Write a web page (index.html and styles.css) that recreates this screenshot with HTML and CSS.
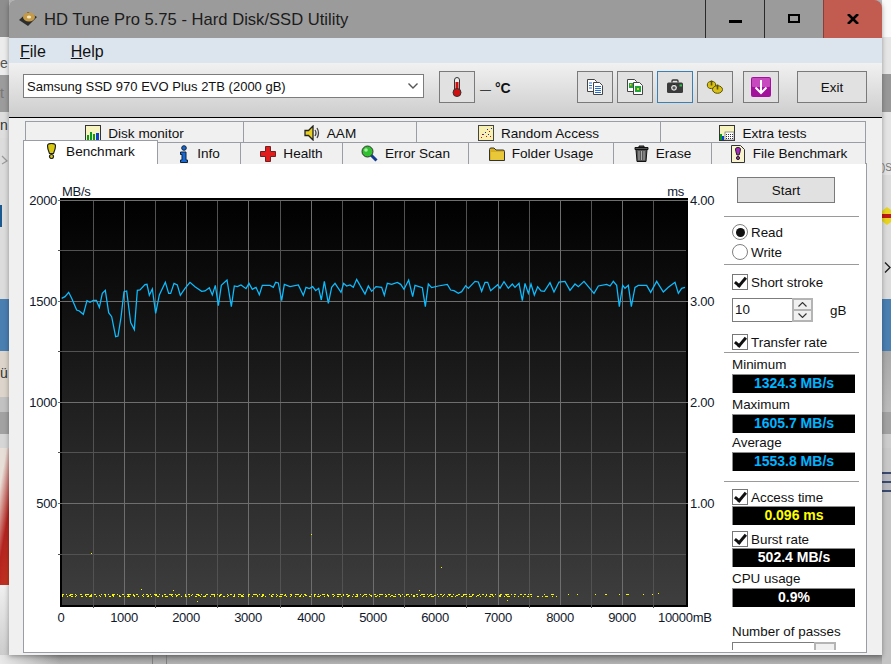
FILE: index.html
```html
<!DOCTYPE html>
<html lang="en">
<head>
    <meta charset="UTF-8">
    <meta name="viewport" content="width=device-width, initial-scale=1.0">
    <title>HD Tune Pro 5.75</title>
    <link rel="stylesheet" href="styles.css">
</head>
<body>
    <!-- what shows of the desktop behind the window -->
    <div class="behind behind-left">
        <div class="b b1"></div>
        <div class="b b2">e</div>
        <div class="b b3">t</div>
        <div class="b b4">n</div>
        <div class="b b5">
            <svg class="left-arrow" viewBox="0 0 9 10" width="9" height="10"><path d="M2 1l5 5-5 3" fill="none" stroke="#999" stroke-width="1.200"/></svg>
            <span class="left-chip"></span>
        </div>
        <div class="b b6"></div>
        <div class="b b7">ü</div>
        <div class="b b8"></div>
        <div class="b b9"></div>
        <div class="b b10"></div>
        <div class="b b11"></div>
        <div class="b b12"></div>
    </div>
    <div class="behind behind-right">
        <div class="b r1"></div>
        <div class="b r2"></div>
        <div class="b r3"></div>
        <div class="b r4">)S</div>
        <div class="b r5">
            <svg class="badge" viewBox="0 0 9 18" width="9" height="18">
                <path d="M5 0 9 3v12l-4 3-5-4V4z" fill="#e8d420"/>
                <path d="M0 7h9v4H0z" fill="#c01818"/>
            </svg>
            <svg class="right-arrow" viewBox="0 0 7 11" width="7" height="11"><path d="M1 .5l5 5-5 5" fill="none" stroke="#222" stroke-width="1.400"/></svg>
        </div>
        <div class="b b6"></div>
        <div class="b r6"></div>
        <div class="b b9"></div>
        <div class="b r7"></div>
        <div class="b r8"></div>
        <div class="b r9"></div>
        <div class="b r10"></div>
    </div>
    <div class="behind behind-bottom"></div>

    <div class="window">
        <div class="title-bar">
            <svg class="app-icon" viewBox="0 0 18 16" width="18" height="16">
                <path d="M0 9 9 1l9 5-9 9z" fill="#2c2c2c"/>
                <ellipse cx="10" cy="6" rx="6" ry="4.500" fill="#c49a48"/>
                <ellipse cx="10" cy="6" rx="2.200" ry="1.600" fill="#f4e6bc"/>
            </svg>
            <span class="title-text">HD Tune Pro 5.75 - Hard Disk/SSD Utility</span>
            <div class="win-btn win-min"><span class="min-glyph"></span></div>
            <div class="win-btn win-max"><span class="max-glyph"></span></div>
            <div class="win-btn win-close">
                <svg viewBox="0 0 12 10" width="12" height="10"><path d="M1 0 11 10M11 0 1 10" stroke="#000" stroke-width="2.600"/></svg>
            </div>
        </div>

        <div class="menu-bar">
            <span class="menu-item"><u>F</u>ile</span>
            <span class="menu-item"><u>H</u>elp</span>
        </div>

        <div class="toolbar">
            <div class="drive-select">
                <span>Samsung SSD 970 EVO Plus 2TB (2000 gB)</span>
                <svg viewBox="0 0 10 6" width="10" height="6"><path d="M.5.5 5 5 9.500.5" fill="none" stroke="#555" stroke-width="1.400"/></svg>
            </div>
            <div class="tool-btn temp-btn">
                <svg viewBox="0 0 12 20" width="12" height="20">
                    <rect x="3.500" y=".5" width="5" height="14" rx="2.500" fill="#eee" stroke="#333"/>
                    <rect x="4.500" y="5" width="3" height="9" fill="#d01010"/>
                    <circle cx="6" cy="15.500" r="4" fill="#d01010" stroke="#333"/>
                </svg>
            </div>
            <span class="temp-text"><span class="temp-dash">—</span> °C</span>
            <div class="tool-btn copy-btn">
                <svg viewBox="0 0 18 18" width="18" height="18">
                    <path d="M1.500 1.500h7l2 2v10h-9z" fill="#fff" stroke="#444"/>
                    <path d="M7.500 4.500h6l3 3v9h-9z" fill="#fff" stroke="#444"/>
                    <path d="M3 5h3M3 7.500h3M3 10h3M9 8.500h6M9 10.500h6M9 12.500h6M9 14.500h6" stroke="#2a6fd0"/>
                </svg>
            </div>
            <div class="tool-btn copy-img-btn">
                <svg viewBox="0 0 18 18" width="18" height="18">
                    <path d="M1.500 1.500h7l2 2v10h-9z" fill="#fff" stroke="#444"/>
                    <path d="M7.500 4.500h6l3 3v9h-9z" fill="#fff" stroke="#444"/>
                    <rect x="3" y="5" width="4" height="5" fill="#1fa83a"/>
                    <rect x="9" y="8" width="6" height="6" fill="#1fa83a"/>
                    <rect x="4" y="6" width="1.500" height="1.500" fill="#e8d020"/>
                    <rect x="11" y="10" width="2" height="2" fill="#e8d020"/>
                </svg>
            </div>
            <div class="tool-btn camera-btn">
                <svg viewBox="0 0 18 16" width="18" height="16">
                    <path d="M6 3.500V2q0-1 1-1h4q1 0 1 1v1.500" fill="none" stroke="#333" stroke-width="1.300"/>
                    <rect x="1" y="3.500" width="16" height="10.500" rx="1.500" fill="#3a3a3a"/>
                    <circle cx="8" cy="8.800" r="3.500" fill="#ddd" stroke="#222"/>
                    <circle cx="8" cy="8.800" r="1.600" fill="#555"/>
                    <rect x="13.500" y="5.500" width="2.500" height="2" fill="#2bc04a"/>
                </svg>
            </div>
            <div class="tool-btn keys-btn">
                <svg viewBox="0 0 18 16" width="18" height="16">
                    <ellipse cx="5.500" cy="6" rx="4.200" ry="3.600" fill="#d8c018" stroke="#5a5200"/>
                    <ellipse cx="11.500" cy="10.500" rx="5" ry="3.800" fill="#d8c018" stroke="#5a5200"/>
                    <path d="M5.500 1.500v5M11.500 5.500v5" stroke="#5a5200" stroke-width="1.600"/>
                </svg>
            </div>
            <div class="tool-btn save-btn">
                <svg viewBox="0 0 20 20" width="20" height="20">
                    <rect width="20" height="20" rx="2" fill="#a2109c"/>
                    <rect x="1" y="1" width="18" height="9" rx="1" fill="#c848c0"/>
                    <path d="M10 3v13M4.500 10.500 10 16l5.500-5.500" fill="none" stroke="#fff" stroke-width="2"/>
                </svg>
            </div>
            <div class="tool-btn exit-btn">Exit</div>
        </div>

        <div class="tab-row tab-row-top">
            <div class="tab">
                <svg viewBox="0 0 16 16" width="16" height="16">
                    <rect x=".5" y=".5" width="15" height="15" fill="#f8f4c0" stroke="#333"/>
                    <path d="M2 15V10h2v5zM5 15V7h2v8zM8 15V9h2v6z" fill="#0a9a20"/>
                    <path d="M11 15V8h3v7z" fill="#1040d0"/>
                </svg>
                Disk monitor
            </div>
            <div class="tab">
                <svg viewBox="0 0 16 16" width="16" height="16">
                    <path d="M1 5.500h3.500L9 1v14l-4.500-4.500H1z" fill="#e8d020" stroke="#222" stroke-width="1.300"/>
                    <path d="M11 5q2 3 0 6M13 3q3 5 0 10" fill="none" stroke="#444" stroke-width="1.300"/>
                </svg>
                AAM
            </div>
            <div class="tab">
                <svg viewBox="0 0 16 16" width="16" height="16">
                    <rect x=".5" y=".5" width="15" height="15" fill="#f8f0b0" stroke="#444"/>
                    <path d="M3 12h1v1H3zM5 9h1v1H5zM8 11h1v1H8zM11 6h1v1h-1zM12 11h1v1h-1z" fill="#d01010"/>
                    <path d="M4 9h1v1H4zM7 7h1v1H7zM9 4h1v1H9zM10 9h1v1h-1zM13 3h1v1h-1z" fill="#1030d0"/>
                </svg>
                Random Access
            </div>
            <div class="tab">
                <svg viewBox="0 0 16 16" width="16" height="16">
                    <rect x=".5" y=".5" width="15" height="15" fill="#f8f4c0" stroke="#333"/>
                    <rect x="1" y="9" width="2" height="6" fill="#0a9a20"/>
                    <rect x="3" y="11" width="2" height="4" fill="#1040d0"/>
                    <rect x="6" y="7" width="9" height="8" fill="#fff" stroke="#555" stroke-width=".6"/>
                    <path d="M7 9h1v1H7zM9 9h1v1H9zM11 9h1v1h-1zM13 9h1v1h-1zM7 11h1v1H7zM9 11h1v1H9zM11 11h1v1h-1zM13 11h1v1h-1zM7 13h1v1H7zM9 13h1v1H9zM11 13h1v1h-1zM13 13h1v1h-1z" fill="#334"/>
                </svg>
                Extra tests
            </div>
        </div>

        <div class="tab-row tab-row-bottom">
            <div class="tab tab-active">
                <svg viewBox="0 0 11 16" width="11" height="16">
                    <path d="M1.500 3q0-2.500 4-2.500t4 2.500q0 3-2 7.500h-4Q1.500 6 1.500 3z" fill="#d8c810" stroke="#222" stroke-width="1.200"/>
                    <circle cx="5.500" cy="13.500" r="2" fill="#d8c810" stroke="#222" stroke-width="1.200"/>
                </svg>
                Benchmark
            </div>
            <div class="tab">
                <svg viewBox="0 0 12 18" width="12" height="18">
                    <circle cx="6" cy="3" r="2.300" fill="#1868d8" stroke="#123"/>
                    <path d="M2.500 7H8v8h1.500v2.500h-7V15H4V9.500H2.500z" fill="#1868d8" stroke="#123"/>
                </svg>
                Info
            </div>
            <div class="tab">
                <svg viewBox="0 0 16 16" width="16" height="16">
                    <path d="M5.500.5h5v5h5v5h-5v5h-5v-5h-5v-5h5z" fill="#e01c1c" stroke="#702020"/>
                </svg>
                Health
            </div>
            <div class="tab">
                <svg viewBox="0 0 17 17" width="17" height="17">
                    <path d="M10 10l5.500 5.500" stroke="#123a90" stroke-width="3"/>
                    <circle cx="6.500" cy="6.500" r="5.500" fill="#30c030" stroke="#333"/>
                    <circle cx="5" cy="5" r="1.800" fill="#a8f0a0"/>
                </svg>
                Error Scan
            </div>
            <div class="tab">
                <svg viewBox="0 0 16 16" width="16" height="16">
                    <path d="M.5 3.500q0-1.500 1.500-1.500h3l2 2h7q1.500 0 1.500 1.500v9h-15z" fill="#d8b020" stroke="#333"/>
                    <rect x="2" y="6" width="13" height="8" fill="#e8c838"/>
                </svg>
                Folder Usage
            </div>
            <div class="tab">
                <svg viewBox="0 0 15 17" width="15" height="17">
                    <path d="M1 2.500h13v2H1zM5 2.500V1h5v1.500" fill="#555" stroke="#111"/>
                    <path d="M2 4.500h11l-1 12H3z" fill="#555" stroke="#111"/>
                    <path d="M5 6v9M7.500 6v9M10 6v9" stroke="#aaa"/>
                </svg>
                Erase
            </div>
            <div class="tab">
                <svg viewBox="0 0 16 18" width="16" height="18">
                    <path d="M1.500.5h9l4 4v13h-13z" fill="#f8f4d0" stroke="#333"/>
                    <path d="M5.500 4q0-1.500 2.500-1.500T10.500 4q0 2-1.400 6H6.900Q5.500 6 5.500 4z" fill="#a828c0" stroke="#222"/>
                    <circle cx="8" cy="13" r="1.600" fill="#a828c0" stroke="#222"/>
                </svg>
                File Benchmark
            </div>
        </div>

        <div class="tab-body">
            <svg class="chart" viewBox="24 164 700 487" width="700" height="487">
                <defs>
                    <linearGradient id="plotFill" x1="0" y1="0" x2="0" y2="1">
                        <stop offset="0" stop-color="#000"/>
                        <stop offset="1" stop-color="#3e3e3e"/>
                    </linearGradient>
                </defs>
                <rect x="60" y="198" width="628" height="409" fill="#000"/>
                <rect x="62" y="200" width="624" height="405" fill="url(#plotFill)"/>

                <g class="grid-minor">
                    <path d="M93.500 200V608M155.500 200V608M217.500 200V608M280.500 200V608M342.500 200V608M404.500 200V608M466.500 200V608M529.500 200V608M591.500 200V608M653.500 200V608"/>
                    <path d="M58 250.500H686M58 351.500H686M58 452.500H686M58 554.500H686"/>
                </g>
                <g class="grid-major">
                    <path d="M124.500 200V605M186.500 200V605M248.500 200V605M311.500 200V605M373.500 200V605M435.500 200V605M498.500 200V605M560.500 200V605M622.500 200V605"/>
                    <path d="M58 200.500H688M58 301.500H688M58 402.500H688M58 503.500H688"/>
                </g>

                <g class="latency">
                    <path class="dots-a" d="M62 594.500H530"/>
                    <path class="dots-d" d="M62 595.500H510"/>
                    <path class="dots-b" d="M62 596.500H560"/>
                    <path class="dots-c" d="M520 594.500H660"/>
                    <path d="M91 553h1v1h-1zM311 534h1v1h-1zM441 567h1v1h-1zM141 589h1v1h-1zM173 590h1v1h-1zM197 601h1v1h-1zM419 590h1v1h-1zM507 600h1v1h-1zM658 593h1v1h-1z" class="stray"/>
                </g>

                <g transform="translate(20 180) scale(.33333)">
                    <polyline class="speed" points="125,355 135,350 146,337 155,355 170,390 178,393 190,403 201,362 210,367 220,361 229,361 238,382 247,340 256,331 266,398 275,410 287,470 294,468 303,412 312,335 320,333 332,428 343,449 352,331 360,330 375,314 381,313 388,346 397,327 407,400 418,345 436,307 446,340 452,340 462,310 472,315 481,346 495,325 510,307 525,320 545,334 555,333 568,323 577,345 586,316 595,377 604,316 621,300 634,380 643,318 652,320 663,315 678,326 687,310 697,328 708,322 718,344 727,316 750,316 760,322 767,307 775,309 785,362 793,313 810,320 835,315 850,346 858,322 868,326 878,320 887,332 896,325 904,360 913,304 925,370 935,322 945,310 963,337 971,310 980,318 990,315 1000,322 1010,298 1020,316"/>
                </g>
                <g transform="translate(360 180) scale(.33333)">
                    <polyline class="speed" points="0,316 15,342 25,318 35,334 48,320 65,322 73,346 82,310 95,313 112,307 122,313 132,328 146,300 158,350 165,316 187,323 196,380 205,312 215,323 235,318 262,313 272,330 282,332 295,340 305,335 317,317 325,325 345,304 355,306 365,334 375,307 383,307 392,332 413,314 420,325 432,305 445,325 457,312 465,322 477,310 487,362 495,310 505,340 513,312 523,345 533,320 543,333 553,334 570,308 582,336 597,306 615,304 630,331 645,312 655,320 672,304 702,340 715,318 740,313 750,318 760,304 770,316 778,380 788,316 795,325 805,316 814,380 825,322 835,316 860,316 872,337 890,304 910,336 925,322 945,307 955,340 965,325 975,322"/>
                </g>

                <g class="axis-label">
                    <text x="62" y="196">MB/s</text>
                    <text x="684" y="196" text-anchor="end">ms</text>
                    <g text-anchor="end">
                        <text x="57" y="205">2000</text>
                        <text x="57" y="306">1500</text>
                        <text x="57" y="407">1000</text>
                        <text x="57" y="508">500</text>
                    </g>
                    <text x="690" y="205">4.00</text>
                    <text x="690" y="306">3.00</text>
                    <text x="690" y="407">2.00</text>
                    <text x="690" y="508">1.00</text>
                    <g text-anchor="middle">
                        <text x="61" y="622">0</text>
                        <text x="124" y="622">1000</text>
                        <text x="186" y="622">2000</text>
                        <text x="248" y="622">3000</text>
                        <text x="311" y="622">4000</text>
                        <text x="373" y="622">5000</text>
                        <text x="435" y="622">6000</text>
                        <text x="498" y="622">7000</text>
                        <text x="560" y="622">8000</text>
                        <text x="622" y="622">9000</text>
                    </g>
                    <text x="658" y="622">10000mB</text>
                </g>
            </svg>

            <div class="side">
                <div class="start-btn">Start</div>
                <div class="rule mt-13"></div>

                <div class="option mt-5"><span class="radio radio-on"></span>Read</div>
                <div class="option"><span class="radio"></span>Write</div>
                <div class="rule mt-2"></div>

                <label class="check mt-9"><span class="box"></span>Short stroke</label>
                <div class="spin-row mt-8">
                    <div class="spin-input">10</div>
                    <div class="spin-arrows">
                        <span><svg viewBox="0 0 9 5" width="9" height="5"><path d="M.5 4.500 4.500.5l4 4" fill="none" stroke="#333" stroke-width="1.100"/></svg></span>
                        <span><svg viewBox="0 0 9 5" width="9" height="5"><path d="M.5.5l4 4 4-4" fill="none" stroke="#333" stroke-width="1.100"/></svg></span>
                    </div>
                    <span class="unit">gB</span>
                </div>
                <label class="check mt-12"><span class="box"></span>Transfer rate</label>
                <div class="rule mt-2"></div>

                <div class="stat-label mt-4">Minimum</div>
                <div class="readout cyan">1324.3 MB/s</div>
                <div class="stat-label mt-4">Maximum</div>
                <div class="readout cyan">1605.7 MB/s</div>
                <div class="stat-label mt-2">Average</div>
                <div class="readout cyan">1553.8 MB/s</div>
                <div class="rule mt-10"></div>

                <label class="check mt-7"><span class="box"></span>Access time</label>
                <div class="readout yellow">0.096 ms</div>
                <label class="check mt-6"><span class="box"></span>Burst rate</label>
                <div class="readout white">502.4 MB/s</div>
                <div class="stat-label mt-4">CPU usage</div>
                <div class="readout white">0.9%</div>
                <div class="stat-label mt-17">Number of passes</div>
                <div class="spin-row mt-2">
                    <div class="spin-input passes-input"></div>
                    <div class="spin-arrows passes-arrows">
                        <span><svg viewBox="0 0 9 5" width="9" height="5"><path d="M.5 4.500 4.500.5l4 4" fill="none" stroke="#333" stroke-width="1.100"/></svg></span>
                    </div>
                </div>
            </div>
        </div>
    </div>
</body>
</html>
```

FILE: styles.css
```css
html, body {
    margin: 0;
    height: 100%;
}

body {
    position: relative;
    width: 891px;
    height: 664px;
    overflow: hidden;
    background: #bdbdbd;
    font-family: "Liberation Sans", Arial, sans-serif;
    font-size: 13.4px;
    color: #111;
}

/* desktop behind the window */
.behind {
    position: absolute;
    display: flex;
    flex-direction: column;
    overflow: hidden;
}

.behind-left {
    left: 0;
    top: 0;
    width: 9px;
    height: 664px;
}

.behind-right {
    left: 882px;
    top: 0;
    width: 9px;
    height: 664px;
}

.behind-bottom {
    left: 0;
    top: 655px;
    width: 882px;
    height: 9px;
    background:
        linear-gradient(90deg, transparent 152px, #7e7e7e 152px 153px, transparent 153px 166px, #7e7e7e 166px 167px, transparent 167px),
        linear-gradient(90deg, rgba(240, 240, 240, 0.9), rgba(240, 240, 240, 0) 60px),
        linear-gradient(#8f8f8f, #b2b2b2);
}

.b {
    flex: none;
    box-sizing: border-box;
    font-size: 14px;
    line-height: 16px;
    color: #555;
    white-space: nowrap;
}

.b1 { height: 37px; background: #8e8e8e; }
.b2 { height: 38px; background: #ececec; padding-top: 18px; }
.b3 { height: 37px; background: #9c9c9c; padding-top: 10px; color: #777; }
.b4 { height: 26px; background: #dedede; padding-top: 5px; color: #333; }
.b5 { height: 161px; background: #dcdcdc; padding-top: 17px; }
.b6 { height: 52px; background: #4a7fb2; }
.b7 { height: 46px; background: #ddd5cb; padding-top: 14px; color: #333; }
.b8 { height: 15px; background: #c2c2c2; }
.b9 { height: 22px; background: #a2a2a2; }
.b10 { height: 14px; background: #d6d6d6; }
.b11 { height: 137px; background: linear-gradient(100deg, #e8e0d8 20%, #b42420 60%, #c83820); }
.b12 { height: 79px; background: linear-gradient(#f0f0f0, #c8c8c8); }

.left-arrow {
    display: block;
}

.left-chip {
    display: block;
    width: 2px;
    height: 22px;
    margin-top: 40px;
    background: #1a5a90;
}

.r1 { height: 37px; background: #fafafa; }
.r2 { height: 37px; background: #e6e6e6; }
.r3 { height: 38px; background: #989898; }
.r4 { height: 63px; background: #e4e4e4; padding-top: 50px; font-size: 10px; line-height: 12px; color: #777; }
.r5 { height: 124px; background: #dcdcdc; padding-top: 32px; }
.r6 { height: 61px; background: linear-gradient(#a8a8a8, #bbb); }
.r7 { height: 14px; background: #ccc; }
.r8 { height: 24px; background: #c8c8c8; }
.r9 { height: 20px; background: linear-gradient(#3b4a70 0 2px, #b7b7c0 2px 9px, #3b4a70 9px 11px, #b7b7c0 11px 18px, #3b4a70 18px); }
.r10 { height: 172px; background: #c4c4c4; }

.badge {
    display: block;
}

.right-arrow {
    display: block;
    margin: 37px 0 0 2px;
}

/* window */
.window {
    position: absolute;
    left: 9px;
    top: 0;
    width: 873px;
    height: 655px;
    background: #f0f0f0;
    border-radius: 6px 8px 0 0;
    overflow: hidden;
    box-shadow: 0 1px 5px rgba(0, 0, 0, 0.35);
}

.title-bar {
    display: flex;
    align-items: center;
    height: 38px;
    background: #9b9b9b;
    padding-left: 10px;
}

.app-icon {
    flex: none;
}

.title-text {
    flex: 1;
    margin-left: 7px;
    padding-top: 2px;
    font-size: 16.6px;
    color: #1c1c1c;
}

.win-btn {
    display: flex;
    align-items: center;
    justify-content: center;
    width: 59px;
    height: 38px;
    border-left: 1px solid #2a2a2a;
    box-sizing: border-box;
}

.win-close {
    background: #c25c50;
    border-left-color: #8c3e36;
}

.min-glyph {
    width: 13px;
    height: 3px;
    margin-top: 5px;
    background: #000;
}

.max-glyph {
    width: 8px;
    height: 5px;
    margin-bottom: 2px;
    border: 2.500px solid #000;
}

.menu-bar {
    display: flex;
    align-items: center;
    gap: 25px;
    height: 25px;
    padding: 2px 0 0 11px;
    box-sizing: border-box;
    background: #dce4ee;
    font-size: 16px;
}

.toolbar {
    display: flex;
    align-items: flex-start;
    height: 55px;
    box-sizing: border-box;
    padding: 8px 0 0 14px;
    background: linear-gradient(#f1f1f1, #cdcdcd);
    border-bottom: 1px solid #000;
}

.drive-select {
    display: flex;
    align-items: center;
    justify-content: space-between;
    width: 401px;
    height: 24px;
    margin-top: 3px;
    box-sizing: border-box;
    padding: 0 5px 0 3px;
    background: #fff;
    border: 1px solid #7c7c7c;
    font-size: 13px;
}

.tool-btn {
    display: flex;
    align-items: center;
    justify-content: center;
    width: 36px;
    height: 32px;
    box-sizing: border-box;
    background: #e1e1e1;
    border: 1px solid #7a7a7a;
}

.temp-btn { margin-left: 15px; }

.temp-text {
    width: 102px;
    padding: 9px 0 0 5px;
    box-sizing: border-box;
    font-weight: bold;
    font-size: 14px;
}

.temp-dash {
    font-weight: normal;
    font-size: 11px;
}

.copy-img-btn, .camera-btn, .keys-btn { margin-left: 4px; }
.camera-btn { border-color: #3c7fb1; }
.save-btn { margin-left: 10px; }

.exit-btn {
    width: 70px;
    margin-left: 18px;
}

/* tabs */
.tab-row {
    display: grid;
    height: 21px;
    box-sizing: border-box;
}

.tab-row-top {
    margin: 3px 0 0 16px;
    width: 841px;
    grid-template-columns: 219px 173px 244px 205px;
}

.tab-row-top .tab {
    padding-top: 2px;
}

.tab-row-bottom {
    margin-left: 14px;
    width: 843px;
    grid-template-columns: 135px 83px 102px 126px 145px 98px 154px;
}

.tab {
    display: flex;
    align-items: center;
    justify-content: center;
    gap: 7px;
    box-sizing: border-box;
    background: #f0f0f0;
    border: 1px solid #9a9da3;
    border-left-width: 0;
    border-bottom-width: 0;
    font-size: 13.6px;
}

.tab:first-child {
    border-left-width: 1px;
}

.tab-active {
    position: relative;
    z-index: 1;
    margin-top: -2px;
    height: 24px;
    background: #fff;
    border-left-width: 1px;
    padding-bottom: 3px;
    gap: 9px;
}

.tab-body {
    display: flex;
    width: 844px;
    height: 490px;
    margin-left: 14px;
    box-sizing: border-box;
    background: #fff;
    border: 1px solid #9a9da3;
}

/* chart */
.chart {
    flex: none;
    display: block;
}

.grid-minor path {
    stroke: #525252;
    fill: none;
}

.grid-major path {
    stroke: #6e6e6e;
    fill: none;
}

.speed {
    fill: none;
    stroke: #0cbcff;
    stroke-width: 3.800;
}

.dots-a, .dots-b, .dots-c, .dots-d {
    fill: none;
    stroke: #f8f800;
    stroke-width: 1;
}

.dots-a { stroke-dasharray: 2 2 1 3 3 2 1 4 2 3 4 2 1 2 2 5 1 2; }
.dots-b { stroke-dasharray: 1 4 1 3 2 2 1 5 2 3 1 2 3 4 1 3; }
.dots-c { stroke-dasharray: 1 9 2 12 1 6 3 14 1 8 1 17; }
.dots-d { stroke-dasharray: 1 6 2 5 1 8 1 4 2 7 1 5; }

.stray { fill: #f8f800; }

.axis-label text {
    font-family: "Liberation Sans", Arial, sans-serif;
    font-size: 13px;
    letter-spacing: -0.3px;
    fill: #10182c;
}

/* right hand column */
.side {
    flex: none;
    width: 135px;
    height: 486px;
    overflow: hidden;
    padding-top: 13px;
    box-sizing: border-box;
}

.rule {
    height: 1px;
    background: #9a9a9a;
}

.start-btn {
    display: flex;
    align-items: center;
    justify-content: center;
    width: 98px;
    height: 26px;
    margin-left: 13px;
    box-sizing: border-box;
    background: #e1e1e1;
    border: 1px solid #7a7a7a;
}

.option {
    display: flex;
    align-items: center;
    height: 20px;
    padding-left: 8px;
}

.radio {
    position: relative;
    width: 16px;
    height: 16px;
    box-sizing: border-box;
    margin-right: 3px;
    border: 1px solid #808080;
    border-radius: 50%;
    background: #fff;
}

.radio-on::after {
    content: "";
    position: absolute;
    left: 2.500px;
    top: 2.500px;
    width: 9px;
    height: 9px;
    border-radius: 50%;
    background: #111;
}

.check {
    display: flex;
    align-items: center;
    height: 16px;
    padding-left: 8px;
}

.box {
    position: relative;
    flex: none;
    width: 16px;
    height: 16px;
    box-sizing: border-box;
    margin-right: 3px;
    border: 1px solid #777;
    background: #fff;
}

.box::after {
    content: "";
    position: absolute;
    left: 4px;
    top: 0;
    width: 4px;
    height: 9px;
    border: solid #111;
    border-width: 0 3px 3px 0;
    transform: rotate(40deg);
}

.spin-row {
    display: flex;
    align-items: center;
    margin-left: 8px;
}

.spin-input {
    width: 60px;
    height: 24px;
    box-sizing: border-box;
    padding: 3px 0 0 2px;
    background: #fff;
    border: 1px solid #7c7c7c;
    border-right-width: 0;
}

.spin-arrows {
    display: flex;
    flex-direction: column;
    width: 21px;
    height: 24px;
    box-sizing: border-box;
    border: 2px solid #b4b4b4;
    background: #f0f0f0;
}

.spin-arrows span {
    flex: 1;
    display: flex;
    align-items: center;
    justify-content: center;
}

.spin-arrows span + span {
    border-top: 2px solid #b4b4b4;
}

.unit {
    margin-left: 17px;
}

.stat-label {
    height: 16px;
    line-height: 16px;
    padding-left: 8px;
}

.readout {
    width: 123px;
    height: 19px;
    margin: 1px 0 0 8px;
    box-sizing: border-box;
    background: #000;
    border: solid #8c8c8c;
    border-width: 1px 0 0 1px;
    text-align: center;
    font-weight: bold;
    font-size: 14px;
    line-height: 17px;
}

.cyan { color: #00b4ff; }
.yellow { color: #ffff00; }
.white { color: #fff; }

.passes-input {
    width: 82px;
}

.passes-arrows {
    width: 22px;
}

.mt-2 { margin-top: 2px; }
.mt-4 { margin-top: 4px; }
.mt-5 { margin-top: 5px; }
.mt-6 { margin-top: 6px; }
.mt-7 { margin-top: 7px; }
.mt-8 { margin-top: 8px; }
.mt-9 { margin-top: 9px; }
.mt-10 { margin-top: 10px; }
.mt-12 { margin-top: 12px; }
.mt-13 { margin-top: 13px; }
.mt-17 { margin-top: 17px; }
```
